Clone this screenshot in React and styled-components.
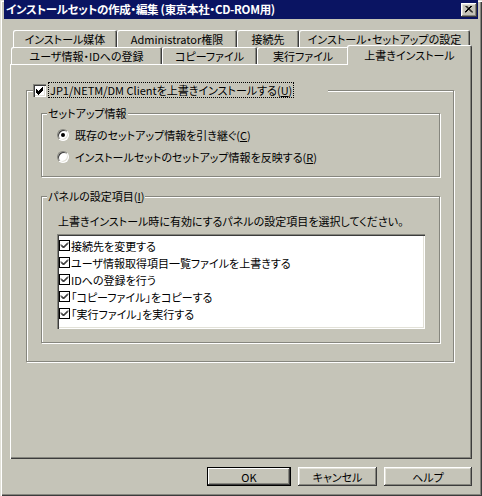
import React from 'react';
import styled, { createGlobalStyle } from 'styled-components';

const FACE = '#c5c4b8';
const LIGHT = '#e2e1d8';
const SHADE = '#86867e';
const DARK = '#3c3c3c';

const GlobalStyle = createGlobalStyle`
  body { margin: 0; background: ${FACE}; }
  * { box-sizing: border-box; }
`;

const Window = styled.div`
  width: 482px;
  height: 496px;
  background: ${FACE};
  display: flex;
  flex-direction: column;
  padding-bottom: 10px;
  box-shadow: inset 1px 1px ${LIGHT}, inset 2px 2px #fff, inset -1px -1px ${DARK}, inset -2px -2px ${SHADE};
  font-family: "Noto Sans CJK JP", "Noto Sans", sans-serif;
  font-size: 11px;
  font-feature-settings: "palt";
  color: #000;
`;

const TitleBar = styled.div`
  height: 19px;
  margin: 0 4px;
  padding: 0 1px 0 2px;
  background: #0a1462;
  display: flex;
  align-items: center;
  justify-content: space-between;
`;

const Title = styled.span`
  color: #fff;
  font-weight: bold;
  font-size: 11.5px;
  letter-spacing: -0.3px;
  line-height: 19px;
  white-space: nowrap;
`;

const CloseButton = styled.div`
  width: 16px;
  height: 14px;
  background: ${FACE};
  box-shadow: inset -1px -1px ${DARK}, inset 1px 1px #fff, inset -2px -2px ${SHADE}, inset 2px 2px ${LIGHT};
  display: flex;
  align-items: center;
  justify-content: center;
  padding-bottom: 1px;
`;

const Body = styled.div`
  flex: 1;
  display: flex;
  flex-direction: column;
  padding: 11px 10px 0 10px;
`;

const TabRow = styled.div`
  display: flex;
  height: 17px;
  align-items: flex-start;
  padding-left: ${p => p.$indent}px;
`;

const Tab = styled.div`
  flex: none;
  width: ${p => p.$w}px;
  height: ${p => (p.$active ? 20 : 17)}px;
  margin: ${p => (p.$active ? '-2px 0 0 -2px' : '0')};
  position: relative;
  z-index: ${p => (p.$active ? 1 : 0)};
  background: ${FACE};
  border-radius: 2px 2px 0 0;
  box-shadow: inset 1px 1px #fff, inset -1px 0 ${DARK}, inset -2px 0 ${SHADE};
  display: flex;
  justify-content: center;
  padding-top: ${p => (p.$active ? 3 : 2)}px;
  line-height: 14px;
  white-space: nowrap;
`;

const Panel = styled.div`
  flex: 1;
  display: flex;
  flex-direction: column;
  padding: 1px 2px 2px 1px;
  box-shadow: inset 1px 1px #fff, inset -1px -1px ${DARK}, inset -2px -2px ${SHADE};
`;

const Group = styled.div`
  display: flex;
  flex-direction: column;
  border: 1px solid ${SHADE};
  box-shadow: inset 1px 1px #fff, 1px 1px #fff;
`;

const OuterGroup = styled(Group)`
  margin: 25px 16px 0 15px;
  padding: 0 13px 18px 14px;
`;

const InnerGroup = styled(Group)`
  margin-top: ${p => p.$top}px;
  padding-bottom: ${p => p.$bottom}px;
`;

const Caption = styled.div`
  align-self: flex-start;
  height: 14px;
  line-height: 14px;
  margin: -8px 0 0 ${p => p.$indent}px;
  padding: 0 1px;
  background: ${FACE};
  white-space: nowrap;
  display: flex;
  align-items: center;
`;

const CheckCaption = styled(Caption)`
  width: 295px;
  padding: 0;
  gap: 3px;
`;

const FocusLabel = styled.span`
  outline: 1px dotted #000;
  height: 14px;
  line-height: 14px;
  padding: 0 1px;
`;

const CheckBox = styled.span`
  flex: none;
  width: 13px;
  height: 13px;
  background: #fff;
  box-shadow: inset 1px 1px ${SHADE}, inset 2px 2px ${DARK}, inset -1px -1px #fff, inset -2px -2px ${LIGHT};
  display: flex;
  align-items: center;
  justify-content: center;
`;

const RadioList = styled.div`
  display: flex;
  flex-direction: column;
  margin-top: 4px;
  padding-left: 15px;
`;

const RadioRow = styled.label`
  height: 22px;
  display: flex;
  align-items: center;
  gap: 6px;
  white-space: nowrap;
`;

const Radio = styled.span`
  flex: none;
  width: 12px;
  height: 12px;
  border-radius: 50%;
  background: #fff;
  border: 1px solid;
  border-color: ${SHADE} #fff #fff ${SHADE};
  box-shadow: inset 1px 1px ${DARK}, inset -1px -1px ${LIGHT};
  display: flex;
  align-items: center;
  justify-content: center;
  &::after {
    content: '';
    width: 4px;
    height: 4px;
    border-radius: 50%;
    background: ${p => (p.$on ? '#000' : 'transparent')};
  }
`;

const Hint = styled.div`
  margin: 11px 0 0 16px;
  height: 14px;
  line-height: 14px;
  white-space: nowrap;
`;

const ListBox = styled.div`
  margin: 6px 0 0 15px;
  width: 368px;
  height: 95px;
  background: #fff;
  padding: 3px 2px 2px 2px;
  box-shadow: inset 1px 1px ${SHADE}, inset 2px 2px ${DARK}, inset -1px -1px #fff, inset -2px -2px ${LIGHT};
`;

const ListItem = styled.div`
  height: 17px;
  display: flex;
  align-items: center;
  gap: 1px;
  white-space: nowrap;
`;

const ButtonRow = styled.div`
  display: flex;
  justify-content: flex-end;
  gap: 7px;
  margin-top: 8px;
  height: 19px;
`;

const Button = styled.div`
  width: ${p => p.$w}px;
  height: 19px;
  background: ${FACE};
  display: flex;
  align-items: center;
  justify-content: center;
  line-height: 14px;
  box-shadow: ${p =>
    p.$default
      ? `inset 0 0 0 1px #000, inset -2px -2px ${DARK}, inset 2px 2px #fff, inset -3px -3px ${SHADE}`
      : `inset -1px -1px ${DARK}, inset 1px 1px #fff, inset -2px -2px ${SHADE}, inset 2px 2px ${LIGHT}`};
`;

const Key = ({ k }) => (
  <>(<u>{k}</u>)</>
);

const Tick = () => (
  <svg width="9" height="9" viewBox="0 0 9 9">
    <path d="M1 3.5 L3.5 6 L8 1.5 M1 4.5 L3.5 7 L8 2.5 M1 5.5 L3.5 8 L8 3.5" stroke="#000" strokeWidth="1" fill="none" shapeRendering="crispEdges" />
  </svg>
);

const SmallCheck = () => (
  <svg width="11" height="11" viewBox="0 0 11 11">
    <rect x="0.5" y="0.5" width="10" height="10" fill="#fff" stroke="#000" />
    <path d="M2 4.5 L4.5 7 L9 2.5 M2 5.5 L4.5 8 L9 3.5" stroke="#000" strokeWidth="1" fill="none" />
  </svg>
);

const topTabs = [
  { label: 'インストール媒体', w: 104 },
  { label: 'Administrator権限', w: 120 },
  { label: '接続先', w: 62 },
  { label: 'インストール・セットアップの設定', w: 171 },
];

const bottomTabs = [
  { label: 'ユーザ情報・IDへの登録', w: 151 },
  { label: 'コピーファイル', w: 95 },
  { label: '実行ファイル', w: 92 },
  { label: '上書きインストール', w: 125, active: true },
];

const panelItems = [
  '接続先を変更する',
  'ユーザ情報取得項目一覧ファイルを上書きする',
  'IDへの登録を行う',
  '「コピーファイル」をコピーする',
  '「実行ファイル」を実行する',
];

export default function App() {
  return (
    <>
      <GlobalStyle />
      <Window>
        <TitleBar>
          <Title>インストールセットの作成・編集 (東京本社・CD-ROM用)</Title>
          <CloseButton>
            <svg width="8" height="7" viewBox="0 0 8 7">
              <path d="M0.5 0 L7 6.5 M1.5 0 L8 6.5 M7 0 L0.5 6.5 M6 0 L-0.5 6.5" stroke="#000" strokeWidth="1" fill="none" />
            </svg>
          </CloseButton>
        </TitleBar>
        <Body>
          <TabRow $indent={3}>
            {topTabs.map(t => (
              <Tab key={t.label} $w={t.w}>{t.label}</Tab>
            ))}
          </TabRow>
          <TabRow $indent={1}>
            {bottomTabs.map(t => (
              <Tab key={t.label} $w={t.w} $active={t.active}>{t.label}</Tab>
            ))}
          </TabRow>
          <Panel>
            <OuterGroup>
              <CheckCaption $indent={-8}>
                <CheckBox><Tick /></CheckBox>
                <FocusLabel>JP1/NETM/DM Clientを上書きインストールする<Key k="U" /></FocusLabel>
              </CheckCaption>
              <InnerGroup $top={16} $bottom={8}>
                <Caption $indent={5}>セットアップ情報</Caption>
                <RadioList>
                  <RadioRow><Radio $on /><span>既存のセットアップ情報を引き継ぐ<Key k="C" /></span></RadioRow>
                  <RadioRow><Radio /><span>インストールセットのセットアップ情報を反映する<Key k="R" /></span></RadioRow>
                </RadioList>
              </InnerGroup>
              <InnerGroup $top={19} $bottom={13}>
                <Caption $indent={5}><span>パネルの設定項目<Key k="I" /></span></Caption>
                <Hint>上書きインストール時に有効にするパネルの設定項目を選択してください。</Hint>
                <ListBox>
                  {panelItems.map(item => (
                    <ListItem key={item}><SmallCheck /><span>{item}</span></ListItem>
                  ))}
                </ListBox>
              </InnerGroup>
            </OuterGroup>
          </Panel>
          <ButtonRow>
            <Button $w={84} $default>OK</Button>
            <Button $w={79}>キャンセル</Button>
            <Button $w={88}>ヘルプ</Button>
          </ButtonRow>
        </Body>
      </Window>
    </>
  );
}
